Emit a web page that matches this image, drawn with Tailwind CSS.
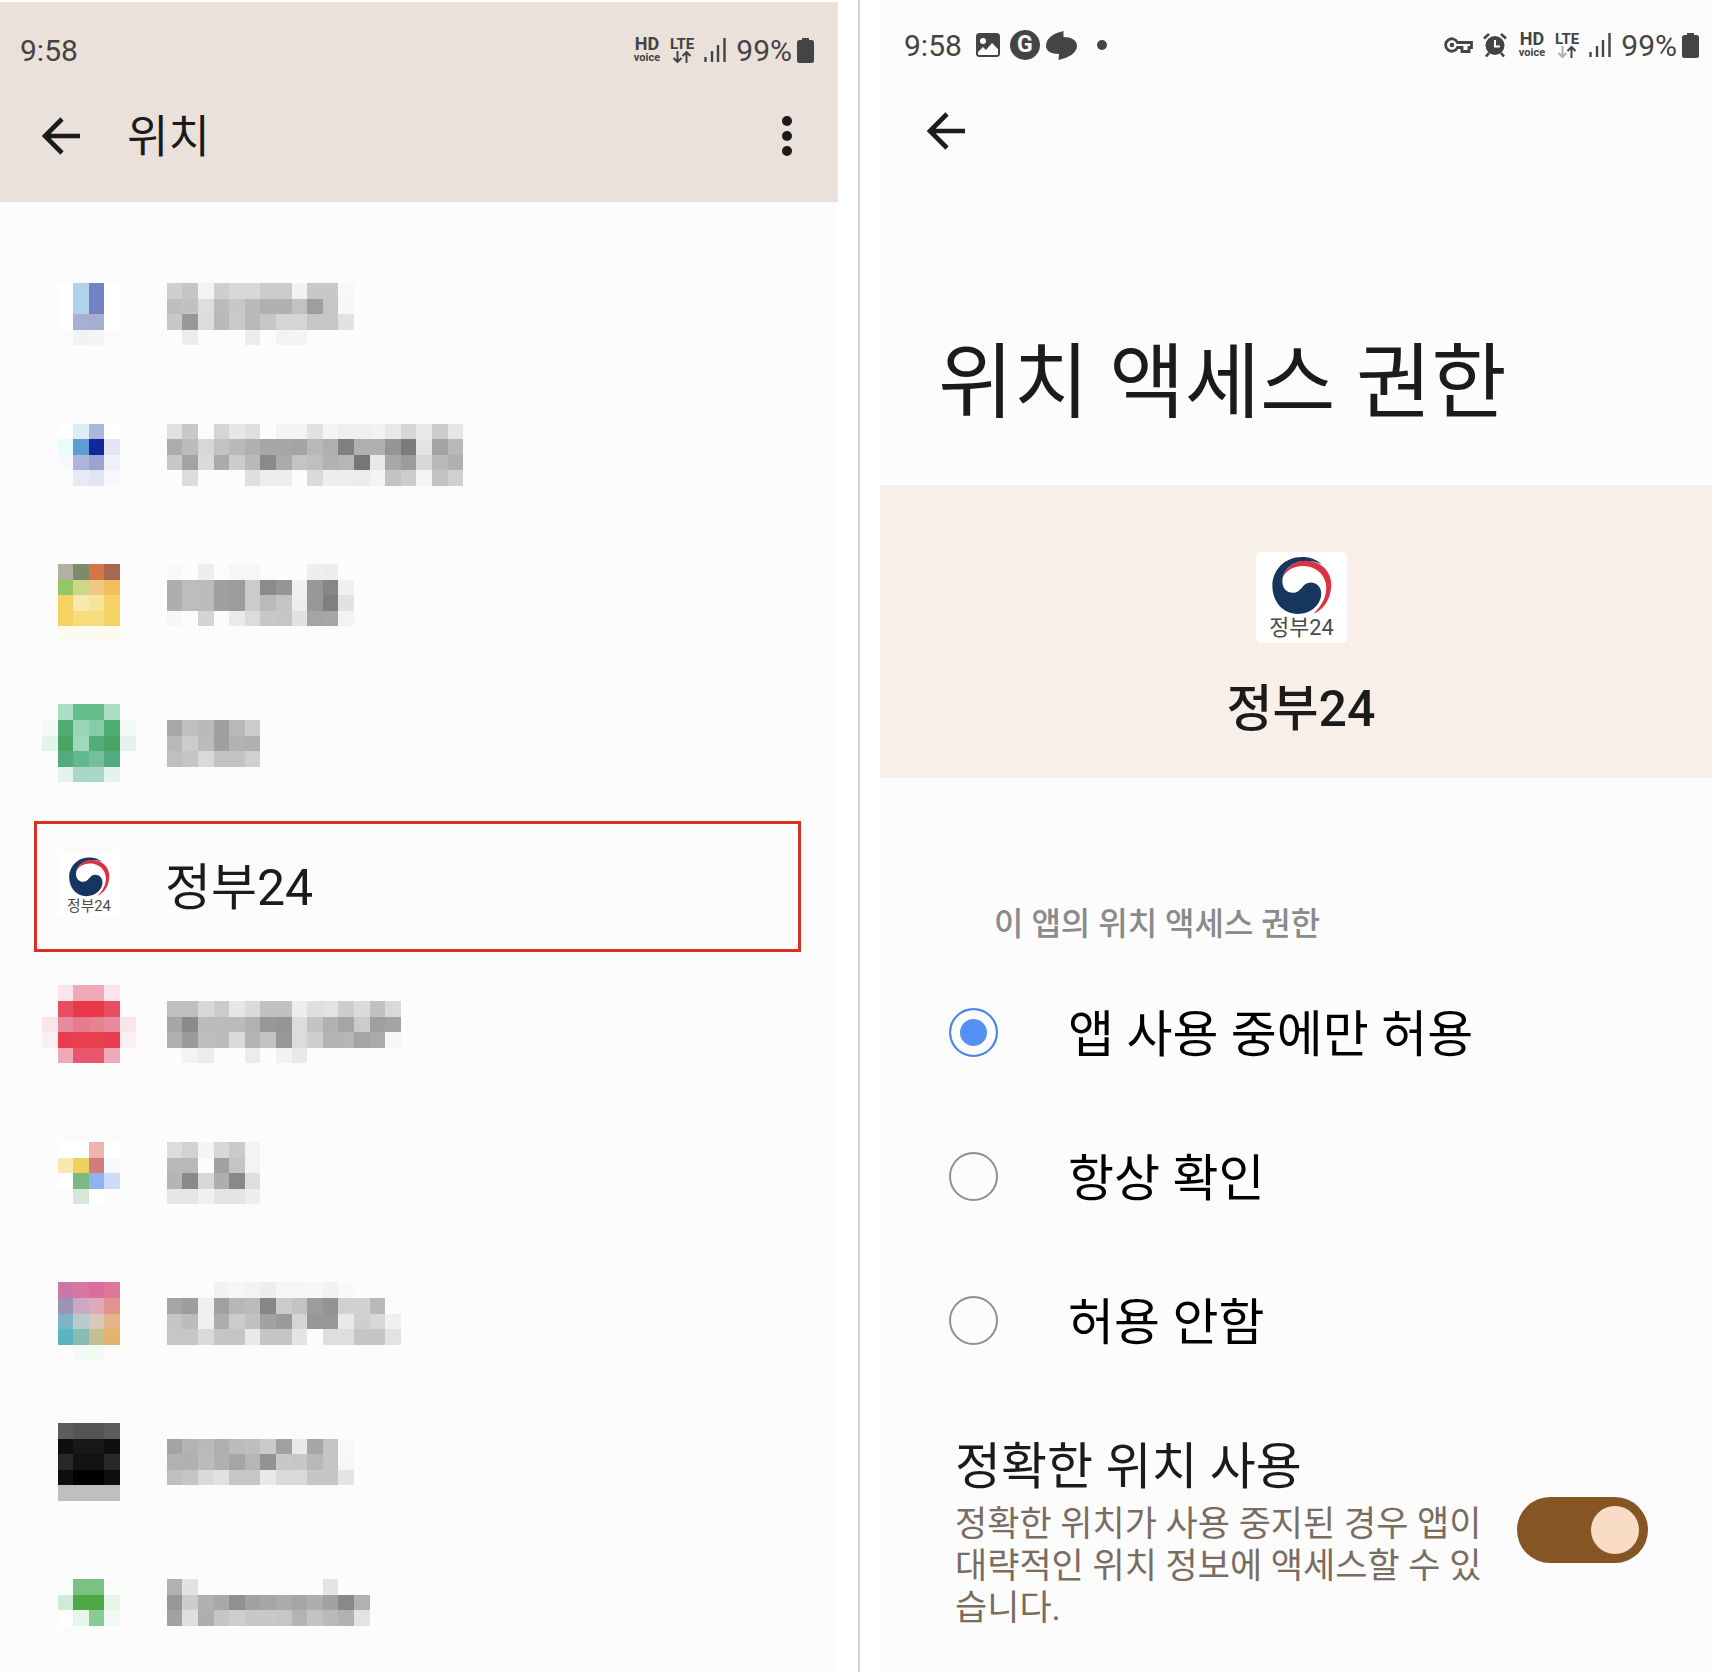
<!DOCTYPE html>
<html lang="ko">
<head>
  <meta charset="UTF-8">
  <title>위치 액세스 권한</title>
  <meta name="viewport" content="width=device-width, initial-scale=1" />
  <script src="https://cdn.jsdelivr.net/npm/@tailwindcss/browser@4"></script>
</head>
<body class="bg-white font-[Roboto,'Noto_Sans_CJK_KR',sans-serif] text-[#1b1b1b]">

  <svg class="hidden">
    <symbol id="back" viewBox="0 0 40 40">
      <path d="M39 20H4M21 3L4 20l17 17" fill="none" stroke="currentColor" stroke-width="4.6" />
    </symbol>
    <symbol id="signal" viewBox="0 0 22 24">
      <path d="M1.5 19v5M8 13v11M14 7v17M20.5 0v24" fill="none" stroke="currentColor" stroke-width="2.4" />
    </symbol>
    <symbol id="battery" viewBox="0 0 17 25">
      <path d="M5 0h7v2h2.500a2.500 2.500 0 0 1 2.500 2.500v18a2.500 2.500 0 0 1-2.500 2.500h-12a2.500 2.500 0 0 1-2.500-2.500v-18a2.500 2.500 0 0 1 2.500-2.500h2.500z" fill="currentColor" />
    </symbol>
    <symbol id="gov" viewBox="168 95 272 272">
      <rect x="168" y="95" width="272" height="272" rx="16" fill="#fff" />
      <path fill="#17365f" d="M365 132C345 115 325 110 305 110C255 110 217 148 217 196C217 245 250 280 292 280C335 280 363 250 363 219C363 198 348 186 332 186C305 186 305 217 278 217C260 217 247 203 247 184C247 150 275 124 312 122C332 121 350 124 365 132Z" />
      <path fill="#d93344" d="M248 172C255 140 285 120 318 121C362 122 393 152 393 192C393 235 370 268 340 279C365 255 378 230 378 202C378 165 348 138 310 137C280 137 258 150 248 172Z" />
      <text x="304" y="344" font-size="65" text-anchor="middle" fill="#4a4a4a">정부24</text>
    </symbol>
  </svg>

  <main class="grid min-h-screen grid-cols-[838fr_42px_832fr] overflow-hidden">

    <!-- 앱 목록 -->
    <section class="mt-0.5 bg-[#fcfcfc]">
      <header class="bg-[#eae1db] pb-7">
        <div class="flex h-24 items-center justify-between pr-6 pl-5 text-[30px] text-[#444]">
          <span>9:58</span>
          <div class="flex items-center gap-2.5">
            <div class="flex flex-col items-center font-bold">
              <span class="text-[18px] leading-4">HD</span>
              <span class="text-[11px] leading-3">voice</span>
            </div>
            <div class="flex flex-col items-center font-bold">
              <span class="text-[15px] leading-[14px]">LTE</span>
              <svg class="h-3 w-5" viewBox="0 0 20 12" fill="none" stroke="currentColor" stroke-width="2">
                <path d="M5.500 0v11M1.500 7l4 4 4-4M14.500 12V1M10.500 5l4-4 4 4" />
              </svg>
            </div>
            <svg class="h-6 w-[22px]"><use href="#signal" /></svg>
            <div class="flex items-center gap-[5px]">
              <span>99%</span>
              <svg class="h-[25px] w-[17px]"><use href="#battery" /></svg>
            </div>
          </div>
        </div>
        <div class="flex h-[76px] items-center pr-[43px] pl-[41px]">
          <button class="mr-[46px] size-10" aria-label="뒤로"><svg class="size-10"><use href="#back" /></svg></button>
          <h1 class="grow pt-1 text-[45px]">위치</h1>
          <button aria-label="더보기">
            <svg class="h-10 w-4" viewBox="0 0 16 40" fill="currentColor">
              <circle cx="8" cy="5" r="5" /><circle cx="8" cy="20" r="5" /><circle cx="8" cy="35" r="5" />
            </svg>
          </button>
        </div>
      </header>
      <ul id="app-list" class="mt-[30px]"></ul>
    </section>

    <div class="flex justify-center"><div class="w-0.5 bg-[#d0d0d0]"></div></div>

    <!-- 권한 설정 -->
    <section class="bg-[#fcfcfc]">
      <div class="flex h-[90px] items-center justify-between pr-[13px] pl-6 text-[30px] text-[#444]">
        <div class="flex items-center">
          <span class="mr-3.5">9:58</span>
          <svg class="mr-2.5 size-6" viewBox="0 0 24 24">
            <rect width="24" height="24" rx="3.500" fill="currentColor" />
            <circle cx="7" cy="8" r="3" fill="#fcfcfc" />
            <path d="M2 19l5-5 3 3 6-7 6 6v5q0 1-1 1H3q-1 0-1-1z" fill="#fcfcfc" />
          </svg>
          <span class="mr-1.5 flex size-[30px] items-center justify-center rounded-full bg-[#444] text-[23px] font-bold text-[#fcfcfc]">G</span>
          <svg class="mr-5 h-[29px] w-[31px]" viewBox="0 0 31 29" fill="currentColor">
            <path d="M17.500 0L17.500 6C25 6 31 9 31 15C31 22 22 27 12.500 29L13 23C5 23 0 20 0 15C0 7 8 2 17.500 0Z" />
          </svg>
          <span class="size-2.5 rounded-full bg-[#444]"></span>
        </div>
        <div class="flex items-center gap-2.5">
          <svg class="h-4 w-[29px]" viewBox="0 0 29 16" fill="none" stroke="currentColor" stroke-width="2.800">
            <path d="M13.500 5.500A6.200 6.200 0 1 0 13.500 10.500H18V14.500H25V10.500H27.500V5.500Z" />
            <circle cx="8" cy="8" r="2.300" fill="currentColor" stroke="none" />
          </svg>
          <svg class="mr-0.5 size-6" viewBox="0 0 24 24" fill="none" stroke="currentColor">
            <circle cx="12" cy="12.500" r="9.500" fill="currentColor" stroke="none" />
            <path d="M1 5.500L6 1M23 5.500L18 1M6 20l-3 3.500M18 20l3 3.500" stroke-width="2.600" />
            <path d="M12 7v6.500h5" stroke="#fcfcfc" stroke-width="2" />
          </svg>
          <div class="flex flex-col items-center font-bold">
            <span class="text-[18px] leading-4">HD</span>
            <span class="text-[11px] leading-3">voice</span>
          </div>
          <div class="flex flex-col items-center font-bold">
            <span class="text-[15px] leading-[14px]">LTE</span>
            <svg class="h-3 w-5" viewBox="0 0 20 12" fill="none" stroke="currentColor" stroke-width="2">
              <path d="M5.500 0v11M1.500 7l4 4 4-4" stroke="#b0b0b0" />
              <path d="M14.500 12V1M10.500 5l4-4 4 4" />
            </svg>
          </div>
          <svg class="h-6 w-[22px]"><use href="#signal" /></svg>
          <div class="flex items-center gap-[5px]">
            <span>99%</span>
            <svg class="h-[25px] w-[17px]"><use href="#battery" /></svg>
          </div>
        </div>
      </div>
      <div class="flex h-[82px] items-center pl-[46px]">
        <button class="size-10" aria-label="뒤로"><svg class="size-10"><use href="#back" /></svg></button>
      </div>

      <h2 class="mt-[155px] pb-[46px] pl-[58px] text-[82px] leading-[112px]">위치 액세스 권한</h2>

      <div class="flex flex-col items-center bg-[#f8efe9] pt-[67px] pb-[39px] pl-2.5">
        <svg class="size-[91px]"><use href="#gov" /></svg>
        <p class="mt-9 text-[50px] leading-[60px] font-medium">정부24</p>
      </div>

      <fieldset class="mt-[126px] pl-[69px] text-black">
        <legend class="mb-4 pl-[45px] text-[32px] leading-10 font-medium text-[#8a8a8a]">이 앱의 위치 액세스 권한</legend>
        <label class="flex h-36 items-center gap-[70px] text-[50px]">
          <input type="radio" name="permission" checked class="size-[49px] appearance-none rounded-full border-2 border-[#8f8f8f] checked:border-[#4a86e8] checked:bg-[#5590f5] checked:shadow-[inset_0_0_0_9px_#fcfcfc]">
          <span class="pt-1.5">앱 사용 중에만 허용</span>
        </label>
        <label class="flex h-36 items-center gap-[70px] text-[50px]">
          <input type="radio" name="permission" class="size-[49px] appearance-none rounded-full border-2 border-[#8f8f8f] checked:border-[#4a86e8] checked:bg-[#5590f5] checked:shadow-[inset_0_0_0_9px_#fcfcfc]">
          <span class="pt-1.5">항상 확인</span>
        </label>
        <label class="flex h-36 items-center gap-[70px] text-[50px]">
          <input type="radio" name="permission" class="size-[49px] appearance-none rounded-full border-2 border-[#8f8f8f] checked:border-[#4a86e8] checked:bg-[#5590f5] checked:shadow-[inset_0_0_0_9px_#fcfcfc]">
          <span class="pt-1.5">허용 안함</span>
        </label>
      </fieldset>

      <label class="mt-[45px] flex items-center gap-7 pr-16 pl-[75px]">
        <span class="flex grow flex-col gap-[7px]">
          <span class="text-[50px] leading-[60px]">정확한 위치 사용</span>
          <span class="text-[35px] leading-[42px] text-[#7a6c60]">정확한 위치가 사용 중지된 경우 앱이 대략적인 위치 정보에 액세스할 수 있습니다.</span>
        </span>
        <input type="checkbox" role="switch" checked class="mb-2 h-[66px] w-[131px] shrink-0 appearance-none rounded-full bg-[#855523] p-[9px] before:block before:size-12 before:rounded-full before:bg-[#f8dcc4] checked:before:ml-auto">
      </label>
    </section>
  </main>

  <script>
    // 가려진 앱: top은 행 안에서의 시작 위치, icon은 6칸, text는 회색 2자리 값
    const apps = [
      { top: 51, icon: [
          '- fff afd3eb 7382c0 fff -', '- fff afd3eb 7382c0 fff -', '- fff a7b0d0 a4aece fff -', '- - f2f2f2 f5f5f5 - -'],
        text: [
          'cf c5 f3 cf d8 d8 cb cb f2 c8 c8 f8', 'be c1 de bb c8 b9 b0 b0 c2 9e c6 f7',
          'c8 98 dd b9 ca b9 c6 d5 d5 c6 c6 e2', '- ec - - - ec - f3 f4'] },
      { top: 47.6, icon: [
          '- fff dcedf6 abb5da fff -', '- e9fbfe 5e9cd5 11279a e2e5f2 -', '- f7f9fd adb5da 9ba4d1 eff0f8 -', '- - e7e9f5 e1e5f2 f8f9fc -'],
        text: [
          'e0 c8 - d5 e6 df - f4 f4 e2 f4 ef ef f2 e8 d6 e8 cd e6', 'ac bc d7 c2 b9 b0 a6 a6 a4 b8 af 7f b0 b0 95 7b e3 a3 b8',
          'c8 a3 db ab cc ba 8a ab c4 bf b2 b6 76 e8 a8 9c d8 ba b0', '- dd - - - df ed ed - db ee ee ec f4 c3 cc f5 c3 d0'] },
      { top: 44, icon: [
          '- b5b1a0 7a8c68 d57544 a66850 -', '- 96c565 ccd888 f1c883 f0be5c -', '- f5d262 f8e9b0 f8e39a f5d262 -',
          '- f5d262 f7dc7e f7dc7e f5d262 -', '- fbfbf1 fbfbf1 fbfbf1 fbfbf1 -'],
        text: [
          'f8 - ee - f6 f6 - - - ee ec', 'ae bd bb 9f 9c cb 8b 95 f0 97 86 f0',
          'ae bd bb 9f 9c cb bb c5 ee 97 7f e2', 'f7 - d4 - ea dc c8 c6 e2 a5 a7 f3'] },
      { top: 40.3, icon: [
          '- abdcc4 66bc8b 66bc8b abdcc4 -', 'f3f9f6 4fab70 99d5b7 86cca7 4fab70 f3f9f6', 'e5f3ed 48a566 9fd8bb 52ac79 48a566 e5f3ed',
          '- 51ab7c 61b78f 74bf9c 51ab7c -', '- e5f3ed a9d8c6 a9d8c6 e5f3ed -'],
        text: ['', 'a8 bf ba 9f b8 cc', 'b8 cc bb 9f b2 b0', 'bf c5 d9 c3 c3 d0'] },
      { name: '정부24' },
      { top: 33.4, icon: [
          '- fae6ea efa9b7 efa9b7 fae6ea -', '- e84c62 e93849 e93849 e84c62 -', 'fae5e9 e78a9d e87a8f e5838f e78a9d fae5e9',
          'faeff1 e83c50 e8404f e8404f e83c50 faeff1', '- efa9b7 e8566e e8566e efa9b7 -'],
        text: [
          '', 'bf c0 d8 cb e7 db c1 c1 ed df e3 cd db c1 d9', 'a6 8a bb bb bb b1 97 95 dc c3 b1 a5 cb 9f a3',
          'b0 9b bd bb db b5 c2 97 dc cf b4 b6 a5 aa f7', '- f3 ec - - ec - f2 e9'] },
      { top: 46, icon: [
          '- fff fff edb4af fff -', '- fae8b3 efd162 d17d7c f6f9fe -', '- fff 7bb882 92b1f1 ccdcf9 -', '- - d3e9d6 fff - -'],
        text: ['dc d2 f4 d8 ca f3', 'b8 b8 fc a1 c4 f3', 'b5 89 d8 ae 89 df', 'e6 e6 f0 e4 e4 ee'] },
      { top: 42.3, icon: [
          '- c979a8 da74a2 da6d9d e0789c -', '- 9d92b7 caa9c4 deaabb e3928f -', '- 7cb4c5 b7cbcc d9c9bb e5b388 -',
          '- 5ab4c1 85bdb3 c3c092 e2b56f -', '- - f2f9f7 f2faf4 - -'],
        text: [
          '- - - f2 f6 f3 ee f6 f6 f7 f2 f9', 'a5 9d ef a1 b7 bb 86 cb c3 9c 93 d1 d1 b9',
          'c5 bc ef ad cc c0 a2 9a d5 98 97 e9 cf d8 f0', 'c6 c6 da c5 c5 e9 c5 c5 e4 - de de c5 c5 e3'] },
      { top: 39, icon: [
          '- 5c5c5c 555555 555555 5c5c5c -', '- 0f0f0f 181818 181818 0f0f0f -', '- 282828 121212 121212 282828 -',
          '- 0f0f0f 000000 000000 0f0f0f -', '- bfbfbf bfbfbf bfbfbf bfbfbf -'],
        text: [
          '', 'a3 b4 ba b0 bc be ca a0 e9 a6 c4 f8', 'b1 b0 bb b0 a5 b6 93 c8 c6 b8 c5 f7',
          'bf c5 da e1 c6 c6 e8 d9 d9 c5 c5 e4'] },
      { top: 51, icon: [
          '- f8fdf9 79c382 79c382 f8fdf9 -', '- d0ebd5 4ea945 4ea945 e8f6ea -', '- fff e8f6ea 86cb91 f2faf4 -'],
        text: [
          'b1 e2 - - - - - - - - e4', '97 cd b0 a9 90 a1 a6 ab a6 ae a2 89 b1', 'a1 df ae c5 ce c8 c8 c6 b3 c3 ba b1 e3'] },
    ];

    const CELL = 15.6;

    function cells(rows, startCol, top, toColor) {
      return rows.map((row, r) => row.split(' ').map((v, c) => {
        if (!v || v === '-') return '';
        const x = Math.round((startCol + c) * CELL), y = Math.round(top + r * CELL);
        const w = Math.round((startCol + c + 1) * CELL) - x;
        const h = Math.round(top + (r + 1) * CELL) - y;
        return `<rect x="${x}" y="${y}" width="${w}" height="${h}" fill="${toColor(v)}" />`;
      }).join('')).join('');
    }

    document.getElementById('app-list').innerHTML = apps.map(app => {
      if (app.name) {
        return `
          <li class="h-36 pt-[13px] pr-[37px] pl-[34px]">
            <button class="flex h-[131px] w-full items-center border-3 border-[#d93025] pl-[21px] text-left text-[50px]">
              <svg class="mr-[45px] mb-1 size-[62px]"><use href="#gov" /></svg>
              <span class="pt-1">${app.name}</span>
            </button>
          </li>`;
      }
      return `
        <li class="h-36 pl-[42px]">
          <svg class="h-36 w-[440px]" viewBox="0 0 440 144" shape-rendering="crispEdges" aria-hidden="true">
            ${cells(app.icon, 0, app.top, v => '#' + v)}
            ${cells(app.text, 8, app.top, v => '#' + v + v + v)}
          </svg>
        </li>`;
    }).join('');
  </script>
</body>
</html>
